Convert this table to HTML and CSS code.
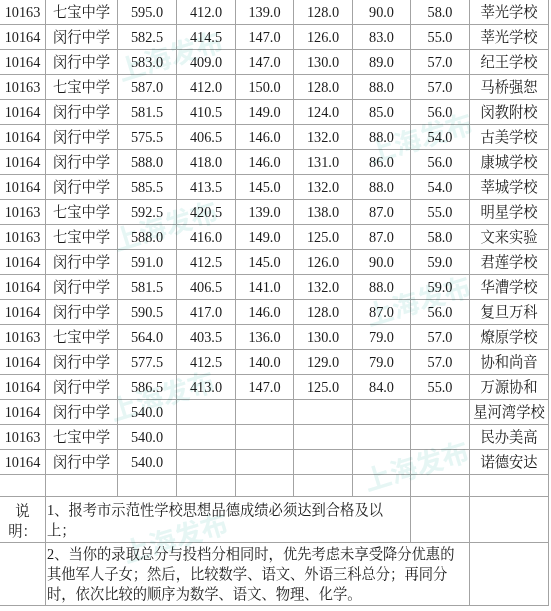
FILE: index.html
```html
<!DOCTYPE html>
<html lang="zh-CN">
<head>
<meta charset="utf-8">
<title>录取分数</title>
<link rel="stylesheet" href="styles.css">
</head>
<body>
<div class="sheet">
<table class="scores">
<colgroup>
<col class="c0"><col class="c1"><col class="c2"><col class="c3"><col class="c4"><col class="c5"><col class="c6"><col class="c7"><col class="c8">
</colgroup>
<tbody>
<tr class="data"><td>10163</td><td>七宝中学</td><td>595.0</td><td>412.0</td><td>139.0</td><td>128.0</td><td>90.0</td><td>58.0</td><td>莘光学校</td></tr>
<tr class="data"><td>10164</td><td>闵行中学</td><td>582.5</td><td>414.5</td><td>147.0</td><td>126.0</td><td>83.0</td><td>55.0</td><td>莘光学校</td></tr>
<tr class="data"><td>10164</td><td>闵行中学</td><td>583.0</td><td>409.0</td><td>147.0</td><td>130.0</td><td>89.0</td><td>57.0</td><td>纪王学校</td></tr>
<tr class="data"><td>10163</td><td>七宝中学</td><td>587.0</td><td>412.0</td><td>150.0</td><td>128.0</td><td>88.0</td><td>57.0</td><td>马桥强恕</td></tr>
<tr class="data"><td>10164</td><td>闵行中学</td><td>581.5</td><td>410.5</td><td>149.0</td><td>124.0</td><td>85.0</td><td>56.0</td><td>闵教附校</td></tr>
<tr class="data"><td>10164</td><td>闵行中学</td><td>575.5</td><td>406.5</td><td>146.0</td><td>132.0</td><td>88.0</td><td>54.0</td><td>古美学校</td></tr>
<tr class="data"><td>10164</td><td>闵行中学</td><td>588.0</td><td>418.0</td><td>146.0</td><td>131.0</td><td>86.0</td><td>56.0</td><td>康城学校</td></tr>
<tr class="data"><td>10164</td><td>闵行中学</td><td>585.5</td><td>413.5</td><td>145.0</td><td>132.0</td><td>88.0</td><td>54.0</td><td>莘城学校</td></tr>
<tr class="data"><td>10163</td><td>七宝中学</td><td>592.5</td><td>420.5</td><td>139.0</td><td>138.0</td><td>87.0</td><td>55.0</td><td>明星学校</td></tr>
<tr class="data"><td>10163</td><td>七宝中学</td><td>588.0</td><td>416.0</td><td>149.0</td><td>125.0</td><td>87.0</td><td>58.0</td><td>文来实验</td></tr>
<tr class="data"><td>10164</td><td>闵行中学</td><td>591.0</td><td>412.5</td><td>145.0</td><td>126.0</td><td>90.0</td><td>59.0</td><td>君莲学校</td></tr>
<tr class="data"><td>10164</td><td>闵行中学</td><td>581.5</td><td>406.5</td><td>141.0</td><td>132.0</td><td>88.0</td><td>59.0</td><td>华漕学校</td></tr>
<tr class="data"><td>10164</td><td>闵行中学</td><td>590.5</td><td>417.0</td><td>146.0</td><td>128.0</td><td>87.0</td><td>56.0</td><td>复旦万科</td></tr>
<tr class="data"><td>10163</td><td>七宝中学</td><td>564.0</td><td>403.5</td><td>136.0</td><td>130.0</td><td>79.0</td><td>57.0</td><td>燎原学校</td></tr>
<tr class="data"><td>10164</td><td>闵行中学</td><td>577.5</td><td>412.5</td><td>140.0</td><td>129.0</td><td>79.0</td><td>57.0</td><td>协和尚音</td></tr>
<tr class="data"><td>10164</td><td>闵行中学</td><td>586.5</td><td>413.0</td><td>147.0</td><td>125.0</td><td>84.0</td><td>55.0</td><td>万源协和</td></tr>
<tr class="data"><td>10164</td><td>闵行中学</td><td>540.0</td><td></td><td></td><td></td><td></td><td></td><td>星河湾学校</td></tr>
<tr class="data"><td>10163</td><td>七宝中学</td><td>540.0</td><td></td><td></td><td></td><td></td><td></td><td>民办美高</td></tr>
<tr class="data"><td>10164</td><td>闵行中学</td><td>540.0</td><td></td><td></td><td></td><td></td><td></td><td>诺德安达</td></tr>
<tr class="blank"><td></td><td></td><td></td><td></td><td></td><td></td><td></td><td></td><td></td></tr>
<tr class="note1"><td class="label">说明：</td><td colspan="6" class="text">1、报考市示范性学校思想品德成绩必须达到合格及以上；</td><td></td><td></td></tr>
<tr class="note2"><td></td><td colspan="7" class="text">2、当你的录取总分与投档分相同时，优先考虑未享受降分优惠的其他军人子女；然后，比较数学、语文、外语三科总分；再同分时，依次比较的顺序为数学、语文、物理、化学。</td><td></td></tr>
</tbody>
</table>
<div class="marks" aria-hidden="true">
<span class="mark m1">上海发布</span>
<span class="mark m2">上海发布</span>
<span class="mark m3">上海发布</span>
<span class="mark m4">上海发布</span>
<span class="mark m5">上海发布</span>
<span class="mark m6">上海发布</span>
<span class="mark m7">上海发布</span>
</div>
</div>
</body>
</html>
```
FILE: styles.css
```css
html, body {
  margin: 0;
  padding: 0;
  background: #ffffff;
}

.sheet {
  position: relative;
  width: 551px;
  height: 611px;
  overflow: hidden;
}

.scores {
  border-collapse: separate;
  border-spacing: 0;
  table-layout: fixed;
  width: 549px;
  font-family: "Liberation Serif", "Noto Serif CJK SC", "Noto Sans CJK SC", serif;
  font-size: 14.3px;
  color: #1a1a1a;
}

.c0 { width: 46px; }
.c1 { width: 72px; }
.c2 { width: 59px; }
.c3 { width: 59px; }
.c4 { width: 58px; }
.c5 { width: 59px; }
.c6 { width: 58px; }
.c7 { width: 59px; }
.c8 { width: 79px; }

.scores td {
  border-right: 1px solid #a3a3a3;
  border-bottom: 1px solid #a3a3a3;
  padding: 0;
  text-align: center;
  vertical-align: middle;
  line-height: 20px;
  white-space: nowrap;
  overflow: hidden;
}

.data { height: 25px; }
.blank { height: 22px; }
.note1 { height: 46px; }
.note2 { height: 63px; }

.scores td.label {
  white-space: normal;
  padding: 3px 2px 0 2px;
}

.scores td.text {
  white-space: normal;
  text-align: left;
  padding: 0 2px 0 1px;
}

.marks {
  position: absolute;
  inset: 0;
  pointer-events: none;
}

.mark {
  position: absolute;
  width: 120px;
  margin-left: -60px;
  margin-top: -16px;
  text-align: center;
  font-family: "Noto Sans CJK SC", sans-serif;
  font-weight: 700;
  font-size: 27px;
  line-height: 32px;
  color: #dcf2f0;
  transform: rotate(-17deg);
  mix-blend-mode: multiply;
  opacity: 0.7;
}

.m1 { left: 170px; top: 55px; }
.m2 { left: 420px; top: 137px; }
.m3 { left: 165px; top: 225px; }
.m4 { left: 418px; top: 300px; }
.m5 { left: 162px; top: 395px; }
.m6 { left: 416px; top: 465px; }
.m7 { left: 175px; top: 537px; }
```
